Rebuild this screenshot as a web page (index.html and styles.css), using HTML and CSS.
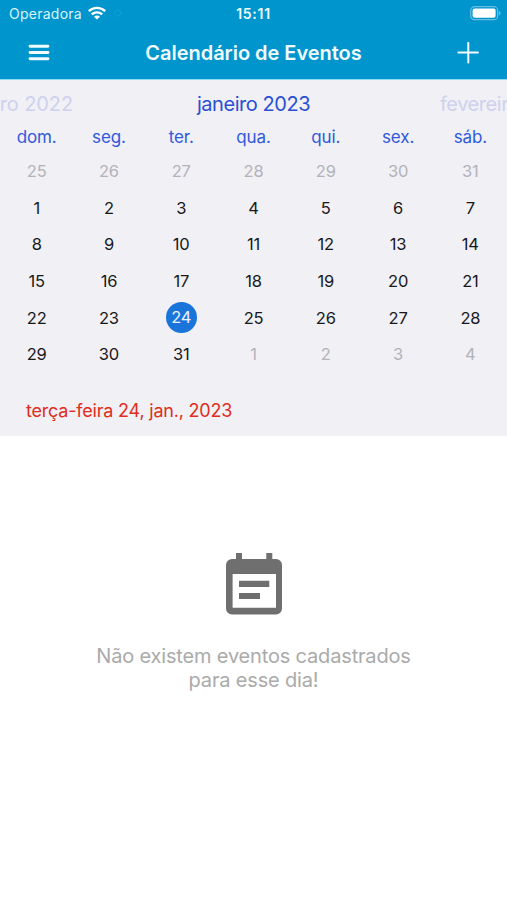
FILE: index.html
```html
<!DOCTYPE html>
<html lang="pt-BR">
<head>
<meta charset="utf-8">
<title>Calendário de Eventos</title>
<link rel="stylesheet" href="styles.css">
</head>
<body>
<header class="top">
  <div class="status">
    <div class="carrier">
      <span class="operator">Operadora</span>
      <svg class="wifi" width="18" height="14" viewBox="0 0 18 14" fill="none" stroke="#fff" stroke-width="2.4">
        <path d="M.8 5.200C5.500.800 12.500.800 17.200 5.200M3.800 8.400c2.900-2.700 7.500-2.700 10.400 0"/>
        <path d="M9 13.600 6 10.700c1.600-1.500 4.400-1.500 6 0z" fill="#fff" stroke="none"/>
      </svg>
      <svg class="activity" width="8" height="8" viewBox="0 0 8 8" fill="none" stroke="#18a1d5" stroke-width="1.5" stroke-dasharray="1.3 1.2"><circle cx="4" cy="4" r="3"/></svg>
    </div>
    <time class="clock">15:11</time>
    <svg class="battery" width="31" height="15" viewBox="0 0 31 15">
      <rect x=".7" y=".7" width="27" height="13" rx="3.8" fill="none" stroke="#65bfe2" stroke-width="1.2"/>
      <rect x="2.600" y="2.600" width="23" height="9.200" rx="2" fill="#fff"/>
      <path d="M29 5v4.500c2-.8 2-3.700 0-4.500z" fill="#65bfe2"/>
    </svg>
  </div>
  <nav class="nav">
    <svg width="22" height="18" viewBox="0 0 22 18" stroke="#f0fcff" stroke-width="2.900" stroke-linecap="round"><path d="M2 2.300h18M2 8.500h18M2 14.700h18"/></svg>
    <h1>Calendário de Eventos</h1>
    <svg width="22" height="22" viewBox="0 0 22 22" stroke="#f0fcff" stroke-width="2" stroke-linecap="round"><path d="M11.300 .9v19.600M1.400 10.500h19.600"/></svg>
  </nav>
</header>
<section class="calendar">
  <div class="months">
    <span class="month prev">dezembro 2022</span>
    <span class="month current">janeiro 2023</span>
    <span class="month next">fevereiro 2023</span>
  </div>
  <div class="week names"><span>dom.</span><span>seg.</span><span>ter.</span><span>qua.</span><span>qui.</span><span>sex.</span><span>sáb.</span></div>
  <div class="week out"><span>25</span><span>26</span><span>27</span><span>28</span><span>29</span><span>30</span><span>31</span></div>
  <div class="week"><span>1</span><span>2</span><span>3</span><span>4</span><span>5</span><span>6</span><span>7</span></div>
  <div class="week"><span>8</span><span>9</span><span>10</span><span>11</span><span>12</span><span>13</span><span>14</span></div>
  <div class="week"><span>15</span><span>16</span><span>17</span><span>18</span><span>19</span><span>20</span><span>21</span></div>
  <div class="week"><span>22</span><span>23</span><span class="selected">24</span><span>25</span><span>26</span><span>27</span><span>28</span></div>
  <div class="week"><span>29</span><span>30</span><span>31</span><span class="out">1</span><span class="out">2</span><span class="out">3</span><span class="out">4</span></div>
  <p class="date">terça-feira 24, jan., 2023</p>
</section>
<main class="empty">
  <svg width="56" height="62" viewBox="0 0 56 62" fill="#6f6f6f">
    <path fill-rule="evenodd" d="M10 0h6v6h24.300V0h6v6H50a6 6 0 0 1 6 6v43.500a6 6 0 0 1-6 6H6a6 6 0 0 1-6-6V12a6 6 0 0 1 6-6h4zM6.600 21v33.700h43.400V21z"/>
    <path d="M13 27.700h30.300v6.200H13zM13 40h21v6.100H13z"/>
  </svg>
  <p>Não existem eventos cadastrados<br>para esse dia!</p>
</main>
</body>
</html>
```
FILE: styles.css
```css
* { box-sizing: border-box; }
body {
  margin: 0;
  width: 507px;
  height: 900px;
  overflow: hidden;
  background: #fff;
  font-family: Inter, "Liberation Sans", sans-serif;
}
h1, p { margin: 0; }
svg { display: block; flex: none; }
.top {
  height: 80px;
  background: #0095cd;
  border-bottom: 1px solid #8fdcf6;
  color: #f0fcff;
}
.status {
  height: 27px;
  display: grid;
  grid-template-columns: 1fr auto 1fr;
  align-items: center;
  padding: 0 9px;
}
.carrier { display: flex; align-items: center; }
.operator { font-size: 14px; letter-spacing: .25px; color: #d8f4ff; }
.wifi { margin: -1px 0 0 6px; }
.activity { margin: -2px 0 0 8px; }
.clock { font-size: 14px; font-weight: 600; letter-spacing: .7px; }
.battery { justify-self: end; margin-right: -3px; }
.nav {
  height: 51px;
  display: flex;
  align-items: center;
  justify-content: space-between;
  padding: 0 28px;
}
.nav h1 { font-size: 20px; line-height: 24px; font-weight: 600; letter-spacing: -.03px; }
.calendar { height: 356px; background: #f0f0f5; overflow: hidden; }
.months {
  height: 42px;
  padding-top: 11px;
  display: grid;
  grid-template-columns: 73px 1fr 67px;
  overflow: hidden;
}
.month { font-size: 20px; line-height: 26px; letter-spacing: -.45px; white-space: nowrap; color: #cfd1ef; }
.prev { justify-self: end; letter-spacing: -.1px; }
.current { justify-self: center; margin-right: 6px; color: #2a4fd5; }
.week {
  height: 36.6px;
  padding: 0 .5px;
  display: grid;
  grid-template-columns: repeat(7, 1fr);
  align-items: center;
  justify-items: center;
  font-size: 16.500px;
  letter-spacing: -.2px;
  color: #18181b;
}
.names { height: 31px; padding-bottom: 1px; font-size: 17px; letter-spacing: -.1px; color: #3159dc; }
.out { color: #b3b3b8; }
.selected {
  width: 31px;
  height: 31px;
  line-height: 31px;
  border-radius: 50%;
  text-align: center;
  background: #1b74da;
  color: #e9f5ff;
}
.date { padding: 27px 26px 0; font-size: 18px; line-height: 22px; letter-spacing: -.2px; color: #df2d20; }
.empty { padding-top: 117px; display: flex; flex-direction: column; align-items: center; }
.empty p { margin-top: 29px; font-size: 20px; line-height: 24px; letter-spacing: -.17px; text-align: center; color: #aaa; }
```
